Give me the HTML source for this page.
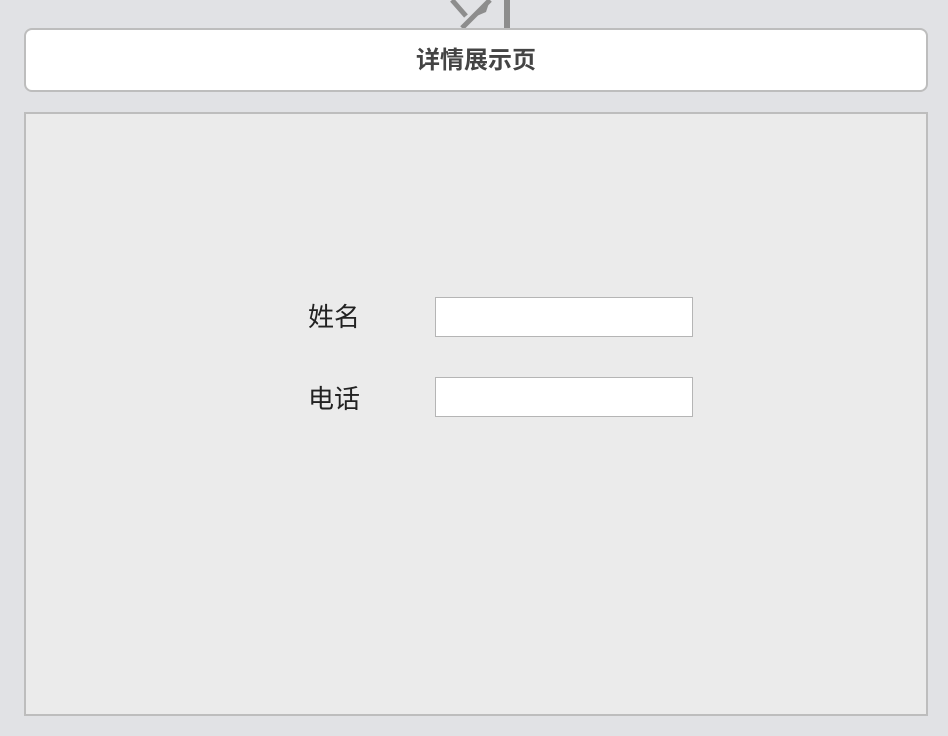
<!DOCTYPE html>
<html><head><meta charset="utf-8"><style>
body{margin:0;width:948px;height:736px;background:#e1e2e5;position:relative;overflow:hidden;font-family:"Liberation Sans","Noto Sans CJK SC",sans-serif}
.hdr{position:absolute;left:24px;top:28px;width:900px;height:60px;background:#fff;border:2px solid #bdbdbd;border-radius:8px;text-align:center;line-height:62px;font-size:24px;font-weight:bold;color:#444}
.panel{position:absolute;left:24px;top:112px;width:900px;height:600px;background:#ebebeb;border:2px solid #bdbdbd}
.lbl{position:absolute;left:308px;font-size:26px;color:#222}
.inp{position:absolute;left:435px;width:256px;height:38px;background:#fff;border:1px solid #b5b5b5}
</style></head><body>
<svg style="position:absolute;left:440px;top:0" width="80" height="30">
<path d="M12 0 L26 16 M22 28 L50 0" stroke="#8d8d8d" stroke-width="5" fill="none"/>
<path d="M32 18 L50 0 L46 12 Z" fill="#8d8d8d"/>
<rect x="64" y="0" width="6" height="28" fill="#8d8d8d"/>
</svg>
<div class="hdr">详情展示页</div>
<div class="panel"></div>
<div class="lbl" style="top:297px">姓名</div>
<div class="inp" style="top:297px"></div>
<div class="lbl" style="top:379px">电话</div>
<div class="inp" style="top:377px"></div>
</body></html>
